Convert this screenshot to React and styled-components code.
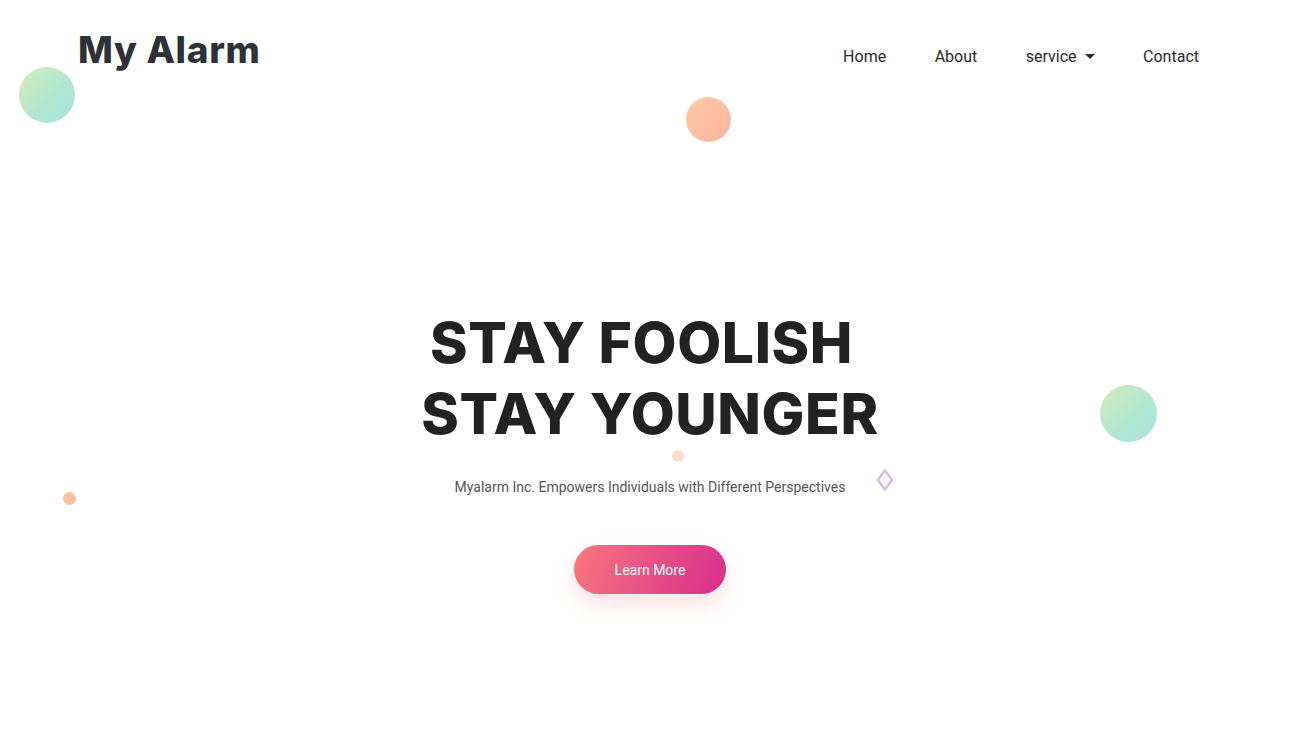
import React from 'react';
import styled, { createGlobalStyle } from 'styled-components';

const GlobalStyle = createGlobalStyle`
  html, body {
    margin: 0;
    padding: 0;
    background: #ffffff;
  }
  body {
    font-family: Roboto, "Liberation Sans", sans-serif;
  }
`;

const Page = styled.div`
  position: relative;
  width: 100%;
  height: 738px;
  overflow: hidden;
  background: #ffffff;
`;

const Header = styled.header`
  display: flex;
  align-items: flex-start;
  justify-content: space-between;
  padding: 28px 97px 0 78px;
`;

const Logo = styled.div`
  font-family: Inter, "Liberation Sans", sans-serif;
  font-weight: 800;
  font-size: 37px;
  letter-spacing: 0.7px;
  line-height: 44px;
  color: #2c3238;
`;

const Nav = styled.nav`
  display: flex;
  align-items: center;
  gap: 48.5px;
  padding-top: 19px;
`;

const NavLink = styled.a`
  display: flex;
  align-items: center;
  font-size: 16px;
  color: #2a2a2a;
  text-decoration: none;
  cursor: pointer;
`;

const Caret = styled.span`
  display: inline-block;
  margin-left: 8px;
  width: 0;
  height: 0;
  border-left: 5px solid transparent;
  border-right: 5px solid transparent;
  border-top: 5px solid #2a2a2a;
`;

const Hero = styled.section`
  display: flex;
  flex-direction: column;
  align-items: center;
  padding: 235px 0 0 4px;
`;

const Title = styled.h1`
  margin: 0;
  font-family: Inter, "Liberation Sans", sans-serif;
  font-weight: 800;
  font-size: 57px;
  line-height: 71px;
  letter-spacing: 0.6px;
  color: #222222;
  text-align: center;
`;

const TitleLine = styled.span`
  display: block;
  padding-right: ${(p) => p.$shift || 0}px;
`;

const Subtitle = styled.p`
  margin: 30px 0 0;
  font-size: 14px;
  color: #555555;
`;

const Button = styled.button`
  margin-top: 50px;
  width: 152px;
  height: 49px;
  border: none;
  border-radius: 25px;
  background: linear-gradient(110deg, #f8777e 0%, #e64d86 55%, #d82f8c 100%);
  color: #ffffff;
  font-family: Roboto, "Liberation Sans", sans-serif;
  font-size: 14px;
  box-shadow: 0 10px 22px rgba(246, 120, 120, 0.22);
  cursor: pointer;
`;

const Bubble = styled.span`
  position: absolute;
  left: ${(p) => p.$x}px;
  top: ${(p) => p.$y}px;
  width: ${(p) => p.$size}px;
  height: ${(p) => p.$size}px;
  border-radius: 50%;
  background: ${(p) =>
    p.$green
      ? 'linear-gradient(135deg, #d4ecb8 0%, #b0e6d3 60%, #a8e4db 100%)'
      : p.$pale
      ? '#ffdccc'
      : 'linear-gradient(135deg, #ffc8a6 0%, #ffb49e 100%)'};
`;

const Diamond = styled.span`
  position: absolute;
  left: 879px;
  top: 474px;
  width: 8px;
  height: 8px;
  border: 2px solid #dcb0f0;
  transform: scaleY(1.35) rotate(45deg);
`;

export default function App() {
  return (
    <Page>
      <GlobalStyle />
      <Header>
        <Logo>My Alarm</Logo>
        <Nav>
          <NavLink>Home</NavLink>
          <NavLink>About</NavLink>
          <NavLink>
            service
            <Caret />
          </NavLink>
          <NavLink>Contact</NavLink>
        </Nav>
      </Header>
      <Hero>
        <Title>
          <TitleLine $shift={17}>STAY FOOLISH</TitleLine>
          <TitleLine>STAY YOUNGER</TitleLine>
        </Title>
        <Subtitle>Myalarm Inc. Empowers Individuals with Different Perspectives</Subtitle>
        <Button>Learn More</Button>
      </Hero>
      <Bubble $green $x={19} $y={67} $size={56} />
      <Bubble $x={686} $y={97} $size={45} />
      <Bubble $green $x={1100} $y={385} $size={57} />
      <Bubble $x={63} $y={492} $size={13} />
      <Bubble $pale $x={672} $y={450} $size={12} />
      <Diamond />
    </Page>
  );
}
